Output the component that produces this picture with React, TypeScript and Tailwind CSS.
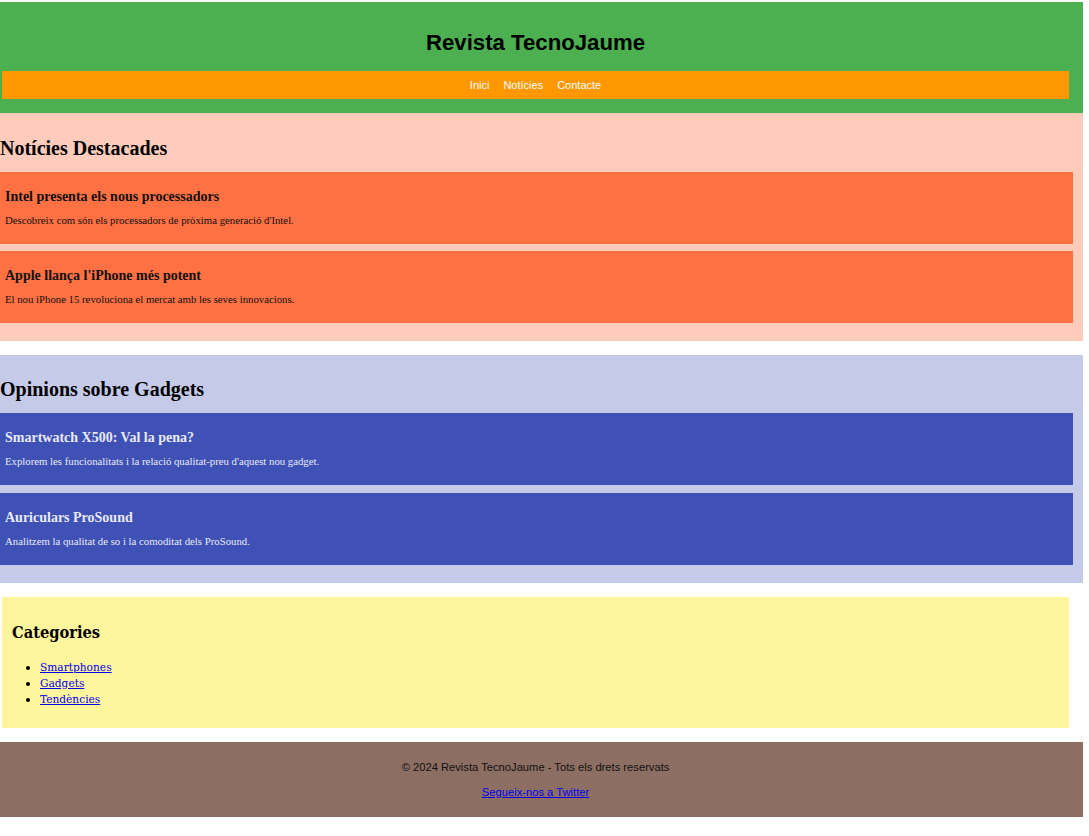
import React from "react";

const serif = { fontFamily: '"Liberation Serif", "Times New Roman", serif' };

function Card({ title, text, blue }: { title: string; text: string; blue?: boolean }) {
  return (
    <div
      className={`w-[1073px] h-[72px] pl-[5px] pt-[16px] ${blue ? "bg-[#3F51B5] text-[#E8EAF6]" : "bg-[#FF7043] text-[#111]"}`}
    >
      <h3 className="font-bold text-[14px] leading-[17px]">{title}</h3>
      <p className="mt-[9px] text-[10.75px] leading-[13px]">{text}</p>
    </div>
  );
}

export default function App() {
  return (
    <div className="w-[1083px] pt-[2px] bg-white min-h-screen" style={serif}>
      <header className="bg-[#4CAF50] h-[111px] pt-[28px]" style={{ fontFamily: '"Liberation Sans", Arial, sans-serif' }}>
        <h1 className="ml-[2px] w-[1067px] text-center font-bold text-[22.2px] leading-[26px] text-black">
          Revista TecnoJaume
        </h1>
        <nav className="mt-[15px] ml-[2px] w-[1067px] h-[28px] bg-[#FF9800] flex justify-center items-center gap-[14px] text-[11px] text-white">
          <span>Inici</span>
          <span>Notícies</span>
          <span>Contacte</span>
        </nav>
      </header>

      <section className="bg-[#FFCCBC] h-[228px] pt-[24px]">
        <h2 className="font-bold text-[20px] leading-[22px] text-black">Notícies Destacades</h2>
        <div className="mt-[13px] flex flex-col gap-[7px]">
          <Card
            title="Intel presenta els nous processadors"
            text="Descobreix com són els processadors de pròxima generació d'Intel."
          />
          <Card
            title="Apple llança l'iPhone més potent"
            text="El nou iPhone 15 revoluciona el mercat amb les seves innovacions."
          />
        </div>
      </section>

      <section className="mt-[14px] bg-[#C5CAE9] h-[228px] pt-[23px]">
        <h2 className="font-bold text-[20px] leading-[22px] text-black">Opinions sobre Gadgets</h2>
        <div className="mt-[13px] flex flex-col gap-[8px]">
          <Card
            blue
            title="Smartwatch X500: Val la pena?"
            text="Explorem les funcionalitats i la relació qualitat-preu d'aquest nou gadget."
          />
          <Card
            blue
            title="Auriculars ProSound"
            text="Analitzem la qualitat de so i la comoditat dels ProSound."
          />
        </div>
      </section>

      <aside
        className="mt-[14px] ml-[2px] w-[1067px] h-[131px] bg-[#FFF59D] pl-[10px] pt-[25px]"
        style={{ fontFamily: '"DejaVu Serif Condensed", "DejaVu Serif", serif' }}
      >
        <h2 className="font-bold text-[16.3px] leading-[22px] text-black">Categories</h2>
        <ul className="mt-[15px] ml-[28px] list-disc text-[11.8px] leading-[16px]">
          <li><a href="#" className="text-[#0000EE] underline">Smartphones</a></li>
          <li><a href="#" className="text-[#0000EE] underline">Gadgets</a></li>
          <li><a href="#" className="text-[#0000EE] underline">Tendències</a></li>
        </ul>
      </aside>

      <footer
        className="mt-[14px] bg-[#8D6E63] h-[75px] pt-[18px]"
        style={{ fontFamily: '"Liberation Sans", Arial, sans-serif' }}
      >
        <div className="ml-[2px] w-[1067px] text-center text-[11.2px] text-[#111]">
          <p className="leading-[14px]">© 2024 Revista TecnoJaume - Tots els drets reservats</p>
          <p className="mt-[11px] leading-[14px]">
            <a href="#" className="text-[#0000EE] underline">Segueix-nos a Twitter</a>
          </p>
        </div>
      </footer>
    </div>
  );
}
